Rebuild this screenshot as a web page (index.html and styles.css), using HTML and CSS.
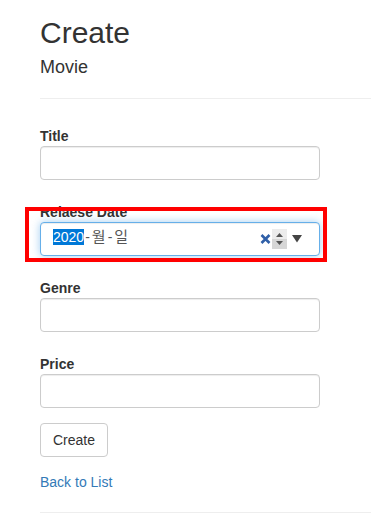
FILE: index.html
```html
<!DOCTYPE html>
<html lang="ko">
<head>
    <meta charset="UTF-8">
    <meta name="viewport" content="width=device-width, initial-scale=1.0">
    <title>Create - Movie</title>
    <link rel="stylesheet" href="styles.css">
</head>
<body>
    <div class="container">
        <h2>Create</h2>
        <h4>Movie</h4>
        <hr>

        <form class="movie-form">
            <div class="form-group">
                <label for="title">Title</label>
                <input id="title" class="form-control" type="text">
            </div>

            <div class="form-group highlighted">
                <label>Relaese Date</label>
                <div class="form-control date-control">
                    <span class="date-text"><span class="selected">2020</span><span class="sep">-</span><span class="ko">월</span><span class="sep">-</span><span class="ko">일</span></span>
                    <span class="date-tools">
                        <svg class="clear-icon" width="11" height="12" viewBox="0 0 11 12">
                            <path d="M1.5 2 L9.5 10 M9.5 2 L1.5 10" stroke="#2f5fa8" stroke-width="2.6"/>
                        </svg>
                        <svg class="spin-icon" width="15" height="20" viewBox="0 0 15 20">
                            <rect x="0" y="0" width="15" height="10" fill="#ececec"/>
                            <rect x="0" y="10" width="15" height="10" fill="#d6d6d6"/>
                            <path d="M4 8 L7.5 4 L11 8 Z" fill="#555"/>
                            <path d="M4 12 L7.5 16 L11 12 Z" fill="#555"/>
                        </svg>
                        <svg class="drop-icon" width="10" height="8" viewBox="0 0 10 8">
                            <path d="M0 0 L10 0 L5 7.5 Z" fill="#444"/>
                        </svg>
                    </span>
                </div>
                <div class="mark"></div>
            </div>

            <div class="form-group">
                <label for="genre">Genre</label>
                <input id="genre" class="form-control" type="text">
            </div>

            <div class="form-group last">
                <label for="price">Price</label>
                <input id="price" class="form-control" type="text">
            </div>

            <button type="button" class="btn">Create</button>
        </form>

        <div class="back-link">
            <a href="#">Back to List</a>
        </div>
        <hr class="footer-line">
    </div>
</body>
</html>
```

FILE: styles.css
```css
* {
    box-sizing: border-box;
}

body {
    margin: 0;
    font-family: "Liberation Sans", Arial, sans-serif;
    font-size: 14px;
    line-height: 20px;
    color: #333;
    background: #fff;
}

.container {
    padding-left: 40px;
}

h2 {
    margin: 16px 0 0;
    font-size: 30px;
    font-weight: 400;
    line-height: 33px;
}

h4 {
    margin: 9px 0 0;
    font-size: 18px;
    font-weight: 400;
    line-height: 19.8px;
}

hr {
    margin: 20px 0 27px;
    border: 0;
    border-top: 1px solid #eee;
}

.form-group {
    position: relative;
    margin-bottom: 22px;
}

.form-group.last {
    margin-bottom: 15px;
}

label {
    display: block;
    font-weight: 700;
    line-height: 20px;
}

.form-control {
    display: block;
    width: 280px;
    height: 34px;
    padding: 6px 12px;
    font-family: inherit;
    font-size: 14px;
    color: #555;
    background: #fff;
    border: 1px solid #ccc;
    border-radius: 4px;
    box-shadow: inset 0 1px 1px rgba(0, 0, 0, 0.075);
}

.date-control {
    display: flex;
    align-items: center;
    padding: 0 17px 0 12px;
    border-color: #66afe9;
    box-shadow: inset 0 1px 1px rgba(0, 0, 0, 0.075), 0 0 8px rgba(102, 175, 233, 0.6);
}

.date-text {
    flex: 1;
    margin-bottom: 4px;
    color: #555;
}

.selected {
    background: #0078d7;
    color: #fff;
}

.sep {
    padding: 0 1px;
}

.ko {
    font-family: "Noto Sans CJK KR", sans-serif;
    font-size: 15px;
    padding: 0 1px;
}

.date-tools {
    display: flex;
    align-items: center;
}

.clear-icon {
    margin-right: 1px;
}

.spin-icon {
    margin-right: 5px;
}

.drop-icon {
    margin-top: 1px;
}

.mark {
    position: absolute;
    top: 5px;
    left: -15px;
    width: 302px;
    height: 55px;
    border: 4px solid #f00;
}

.btn {
    display: block;
    height: 34px;
    padding: 6px 12px;
    font-family: inherit;
    font-size: 14px;
    line-height: 20px;
    color: #333;
    background: #fff;
    border: 1px solid #ccc;
    border-radius: 4px;
    cursor: pointer;
}

.back-link {
    margin-top: 15px;
}

.back-link a {
    color: #337ab7;
    text-decoration: none;
}

.footer-line {
    margin: 20px 0 0;
}
```
